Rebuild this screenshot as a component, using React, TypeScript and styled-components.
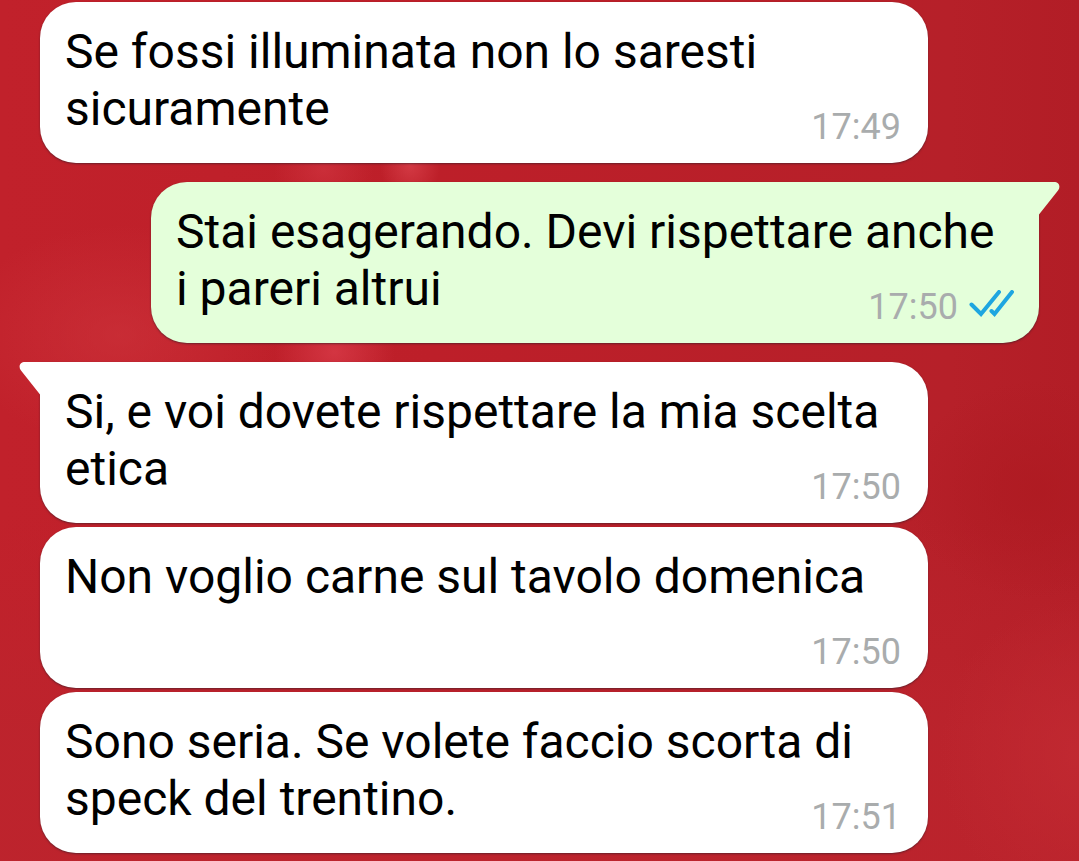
import React from 'react';
import styled, { createGlobalStyle, css } from 'styled-components';

const GlobalStyle = createGlobalStyle`
  *, *::before, *::after { box-sizing: border-box; }
  body {
    margin: 0;
    background: #bb222b;
    font-family: Roboto, "Liberation Sans", sans-serif;
  }
`;

const Chat = styled.main`
  min-height: 100vh;
  padding: 2px 40px 8px;
  overflow: hidden;
  background:
    radial-gradient(ellipse 50px 40px at 30% 170px, rgba(215, 60, 72, 0.5), transparent),
    radial-gradient(ellipse 30px 36px at 38% 165px, rgba(225, 75, 85, 0.6), transparent),
    radial-gradient(ellipse 60px 50px at 31% 352px, rgba(220, 62, 76, 0.7), transparent),
    radial-gradient(ellipse 160px 110px at 11% 335px, rgba(206, 52, 60, 0.6), transparent),
    radial-gradient(ellipse 130px 110px at 96% 490px, rgba(174, 26, 33, 0.8), transparent),
    radial-gradient(ellipse 140px 160px at 100% 755px, rgba(194, 42, 50, 0.8), transparent),
    linear-gradient(180deg, transparent 60%, rgba(188, 36, 45, 0.8) 85%),
    linear-gradient(90deg, #c1212b 0%, #bd1f29 40%, #b62029 88%, #b21d26 100%);
`;

const Messages = styled.ol`
  margin: 0;
  padding: 0;
  list-style: none;
`;

const Bubble = styled.li<{ $sent?: boolean; $first?: boolean }>`
  position: relative;
  display: flow-root;
  margin-top: ${(p) => (p.$first ? 19 : 4)}px;
  margin-left: ${(p) => (p.$sent ? 111 : 0)}px;
  margin-right: ${(p) => (p.$sent ? 0 : 111)}px;
  padding: 21px 25px 19px;
  border-radius: 36px;
  background: ${(p) => (p.$sent ? '#e4ffda' : '#ffffff')};
  color: #000000;
  font-size: 48px;
  line-height: 57px;
  box-shadow: 0 1px 2px rgba(50, 30, 40, 0.6);

  ${(p) =>
    p.$first &&
    (p.$sent
      ? css`border-top-right-radius: 0;`
      : css`border-top-left-radius: 0;`)}

  &:first-child {
    margin-top: 0;
  }
`;

const Meta = styled.span<{ $sent?: boolean }>`
  float: right;
  display: flex;
  align-items: flex-start;
  gap: 10px;
  margin-top: 30px;
  padding-right: ${(p) => (p.$sent ? 0 : 2)}px;
  color: #a9acad;
  font-size: 36px;
  line-height: 34px;
`;

const TailShape = styled.svg<{ $sent?: boolean }>`
  position: absolute;
  top: 0;
  ${(p) => (p.$sent ? 'left: calc(100% - 1px);' : 'right: calc(100% - 1px); transform: scaleX(-1);')}
  fill: ${(p) => (p.$sent ? '#e4ffda' : '#ffffff')};
`;

const Tail = ({ sent }: { sent?: boolean }) => (
  <TailShape $sent={sent} width="22" height="34" viewBox="0 0 22 34" aria-hidden="true">
    <path d="M0 0H16C21 0 23 4.500 20 8.500L1 32.500V34H0Z" />
  </TailShape>
);

const ReadTicks = () => (
  <svg
    width="46"
    height="28"
    viewBox="0 0 46 28"
    fill="none"
    stroke="#1ea6e0"
    strokeWidth="4"
    strokeLinecap="round"
    role="img"
    aria-label="Letto"
  >
    <path d="M3.500 14.500L13 24L31 2" />
    <path d="M23.500 21L26.500 24L44 2" />
  </svg>
);

type Message = { text: string; time: string; sent?: boolean; first?: boolean };

const messages: Message[] = [
  { text: 'Se fossi illuminata non lo saresti sicuramente', time: '17:49' },
  { text: 'Stai esagerando. Devi rispettare anche i pareri altrui', time: '17:50', sent: true, first: true },
  { text: 'Si, e voi dovete rispettare la mia scelta etica', time: '17:50', first: true },
  { text: 'Non voglio carne sul tavolo domenica', time: '17:50' },
  { text: 'Sono seria. Se volete faccio scorta di speck del trentino.', time: '17:51' },
];

export default function App() {
  return (
    <>
      <GlobalStyle />
      <Chat>
        <Messages>
          {messages.map((m) => (
            <Bubble key={m.text} $sent={m.sent} $first={m.first}>
              {m.first && <Tail sent={m.sent} />}
              {m.text}
              <Meta $sent={m.sent}>
                <time>{m.time}</time>
                {m.sent && <ReadTicks />}
              </Meta>
            </Bubble>
          ))}
        </Messages>
      </Chat>
    </>
  );
}
